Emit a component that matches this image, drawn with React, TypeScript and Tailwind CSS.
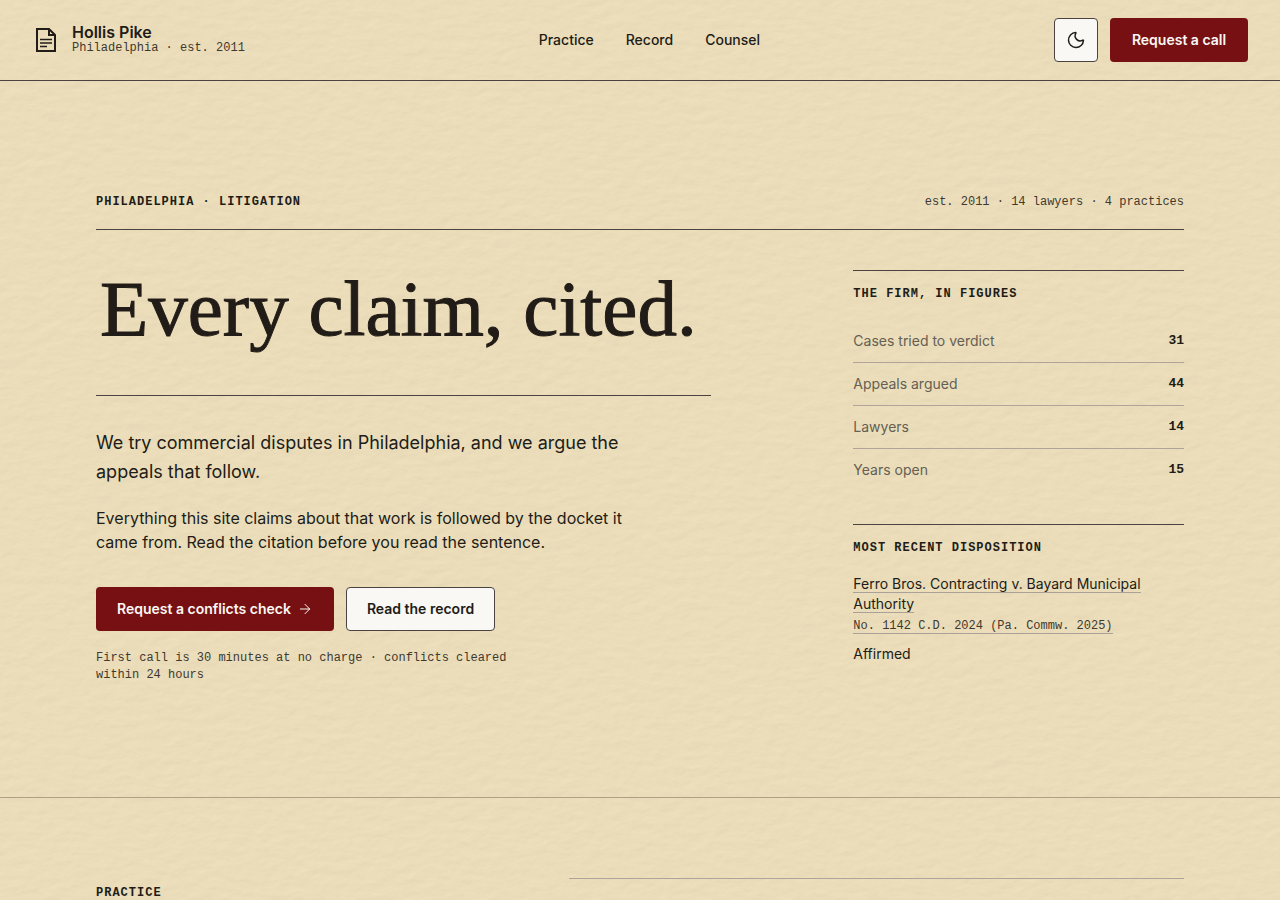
import { ArrowRight, Moon } from 'lucide-react';

const navLinks = [
  { label: 'Practice', href: '#practice' },
  { label: 'Record', href: '#record' },
  { label: 'Counsel', href: '#counsel' },
];

const figures = [
  { label: 'Cases tried to verdict', value: '31' },
  { label: 'Appeals argued', value: '44' },
  { label: 'Lawyers', value: '14' },
  { label: 'Years open', value: '15' },
];

const mono = "font-['Liberation_Mono',monospace]";
const eyebrow = "font-['Liberation_Mono',monospace] text-[12px] leading-4 font-bold uppercase tracking-[1px]";
const primary =
  'flex h-11 min-w-[138px] items-center justify-center gap-1.5 rounded-sm bg-[#771012] px-[21px] text-sm font-semibold text-[#faf8f4]';

function PaperTexture() {
  return (
    <svg aria-hidden="true" className="pointer-events-none absolute inset-0 h-full w-full opacity-30">
      <filter id="paper" x="0" y="0" width="100%" height="100%" colorInterpolationFilters="sRGB">
        <feTurbulence type="fractalNoise" baseFrequency="0.06 0.11" numOctaves="5" seed="8" result="noise" />
        <feDiffuseLighting in="noise" lightingColor="#ebddba" surfaceScale="0.4" diffuseConstant="1.155">
          <feDistantLight azimuth="60" elevation="60" />
        </feDiffuseLighting>
      </filter>
      <rect width="100%" height="100%" filter="url(#paper)" />
    </svg>
  );
}

function LogoMark() {
  return (
    <svg width="24" height="24" viewBox="0 0 24 24" fill="none" stroke="currentColor" strokeWidth="2" aria-hidden="true">
      <path d="M5 1H17L23 7V23H5Z" />
      <path d="M17 1V7H23" />
      <path d="M8 11.5H20M8 15H20M8 18.5H15" strokeWidth="1.5" />
    </svg>
  );
}

function Header() {
  return (
    <header className="flex items-center justify-between border-b border-[#4b4342] px-8 py-[18px]">
      <a href="#top" className="flex items-center gap-4">
        <LogoMark />
        <span className="flex flex-col pb-1">
          <span className="text-base leading-5 font-semibold">Hollis Pike</span>
          <span className={`${mono} text-[12px] leading-3 text-[#3f392f]`}>Philadelphia · est. 2011</span>
        </span>
      </a>
      <nav className="flex gap-8 text-sm font-medium">
        {navLinks.map((link) => (
          <a key={link.label} href={link.href}>{link.label}</a>
        ))}
      </nav>
      <div className="flex gap-3">
        <button
          type="button"
          aria-label="Toggle dark theme"
          className="flex size-11 items-center justify-center rounded-sm border border-[#4b4342] bg-[#faf8f4]"
        >
          <Moon size={20} strokeWidth={1.75} />
        </button>
        <button type="button" className={primary}>Request a call</button>
      </div>
    </header>
  );
}

function Figures() {
  return (
    <section className="border-t border-[#4b4342] pt-[15px]">
      <h2 className={eyebrow}>The firm, in figures</h2>
      <dl className="mt-[18px] divide-y divide-[#b0a49a] text-sm">
        {figures.map((item) => (
          <div key={item.label} className="flex items-center justify-between py-[11px]">
            <dt className="text-[#655f54]">{item.label}</dt>
            <dd className={`${mono} text-[13px] font-bold`}>{item.value}</dd>
          </div>
        ))}
      </dl>
    </section>
  );
}

function Disposition() {
  return (
    <section className="mt-[33px] border-t border-[#4b4342] pt-[15px] text-sm">
      <h2 className={eyebrow}>Most recent disposition</h2>
      <a href="#record" className="mt-[18px] block leading-5">
        <span className="border-b border-[#a9a29a]">Ferro Bros. Contracting v. Bayard Municipal Authority</span>
        <br />
        <span className={`${mono} border-b border-[#a9a29a] text-[12px] text-[#3f392f]`}>
          No. 1142 C.D. 2024 (Pa. Commw. 2025)
        </span>
      </a>
      <p className="mt-2">Affirmed</p>
    </section>
  );
}

export default function App() {
  return (
    <div id="top" className="relative min-h-screen overflow-hidden bg-[#ebddba] font-['Inter',sans-serif] text-[#211c17]">
      <PaperTexture />
      <div className="relative">
        <Header />
        <main>
          <section className="border-b border-[#b0a184] px-8 pt-[113px] pb-[113px]">
            <div className="mx-auto max-w-[1088px]">
              <div className="flex items-center justify-between border-b border-[#4b4342] pb-[19px]">
                <p className={eyebrow}>Philadelphia · Litigation</p>
                <p className={`${mono} text-[12px] leading-4 text-[#3f392f]`}>est. 2011 · 14 lawyers · 4 practices</p>
              </div>
              <div className="mt-10 grid grid-cols-12 gap-x-12">
                <div className="col-span-7">
                  <h1 className="border-b border-[#4b4342] pb-[47px] pl-1 font-['Liberation_Serif',serif] text-[79px] leading-[78px] whitespace-nowrap [-webkit-text-stroke:1px]">
                    Every claim, cited.
                  </h1>
                  <p className="mt-8 max-w-[560px] text-lg leading-[29px]">
                    We try commercial disputes in Philadelphia, and we argue the appeals that follow.
                  </p>
                  <p className="mt-5 max-w-[560px] text-base leading-6">
                    Everything this site claims about that work is followed by the docket it came from. Read the
                    citation before you read the sentence.
                  </p>
                  <div className="mt-[33px] flex gap-3">
                    <button type="button" className={primary}>
                      Request a conflicts check
                      <ArrowRight size={16} strokeWidth={1.5} />
                    </button>
                    <a
                      href="#record"
                      className="flex h-11 items-center rounded-sm border border-[#4b4342] bg-[#faf8f4] px-5 text-sm font-semibold"
                    >
                      Read the record
                    </a>
                  </div>
                  <p className={`${mono} mt-[19px] max-w-[448px] text-[12px] leading-[17px] text-[#3f392f]`}>
                    First call is 30 minutes at no charge · conflicts cleared within 24 hours
                  </p>
                </div>
                <aside className="col-span-4 col-start-9">
                  <Figures />
                  <Disposition />
                </aside>
              </div>
            </div>
          </section>
          <section id="practice" className="px-8 pt-20">
            <div className="mx-auto grid max-w-[1088px] grid-cols-12 gap-x-12">
              <h2 className={`${eyebrow} col-span-5 pt-[7px]`}>Practice</h2>
              <div className="col-span-7 border-t border-[#b0a49a]" />
            </div>
          </section>
        </main>
      </div>
    </div>
  );
}
